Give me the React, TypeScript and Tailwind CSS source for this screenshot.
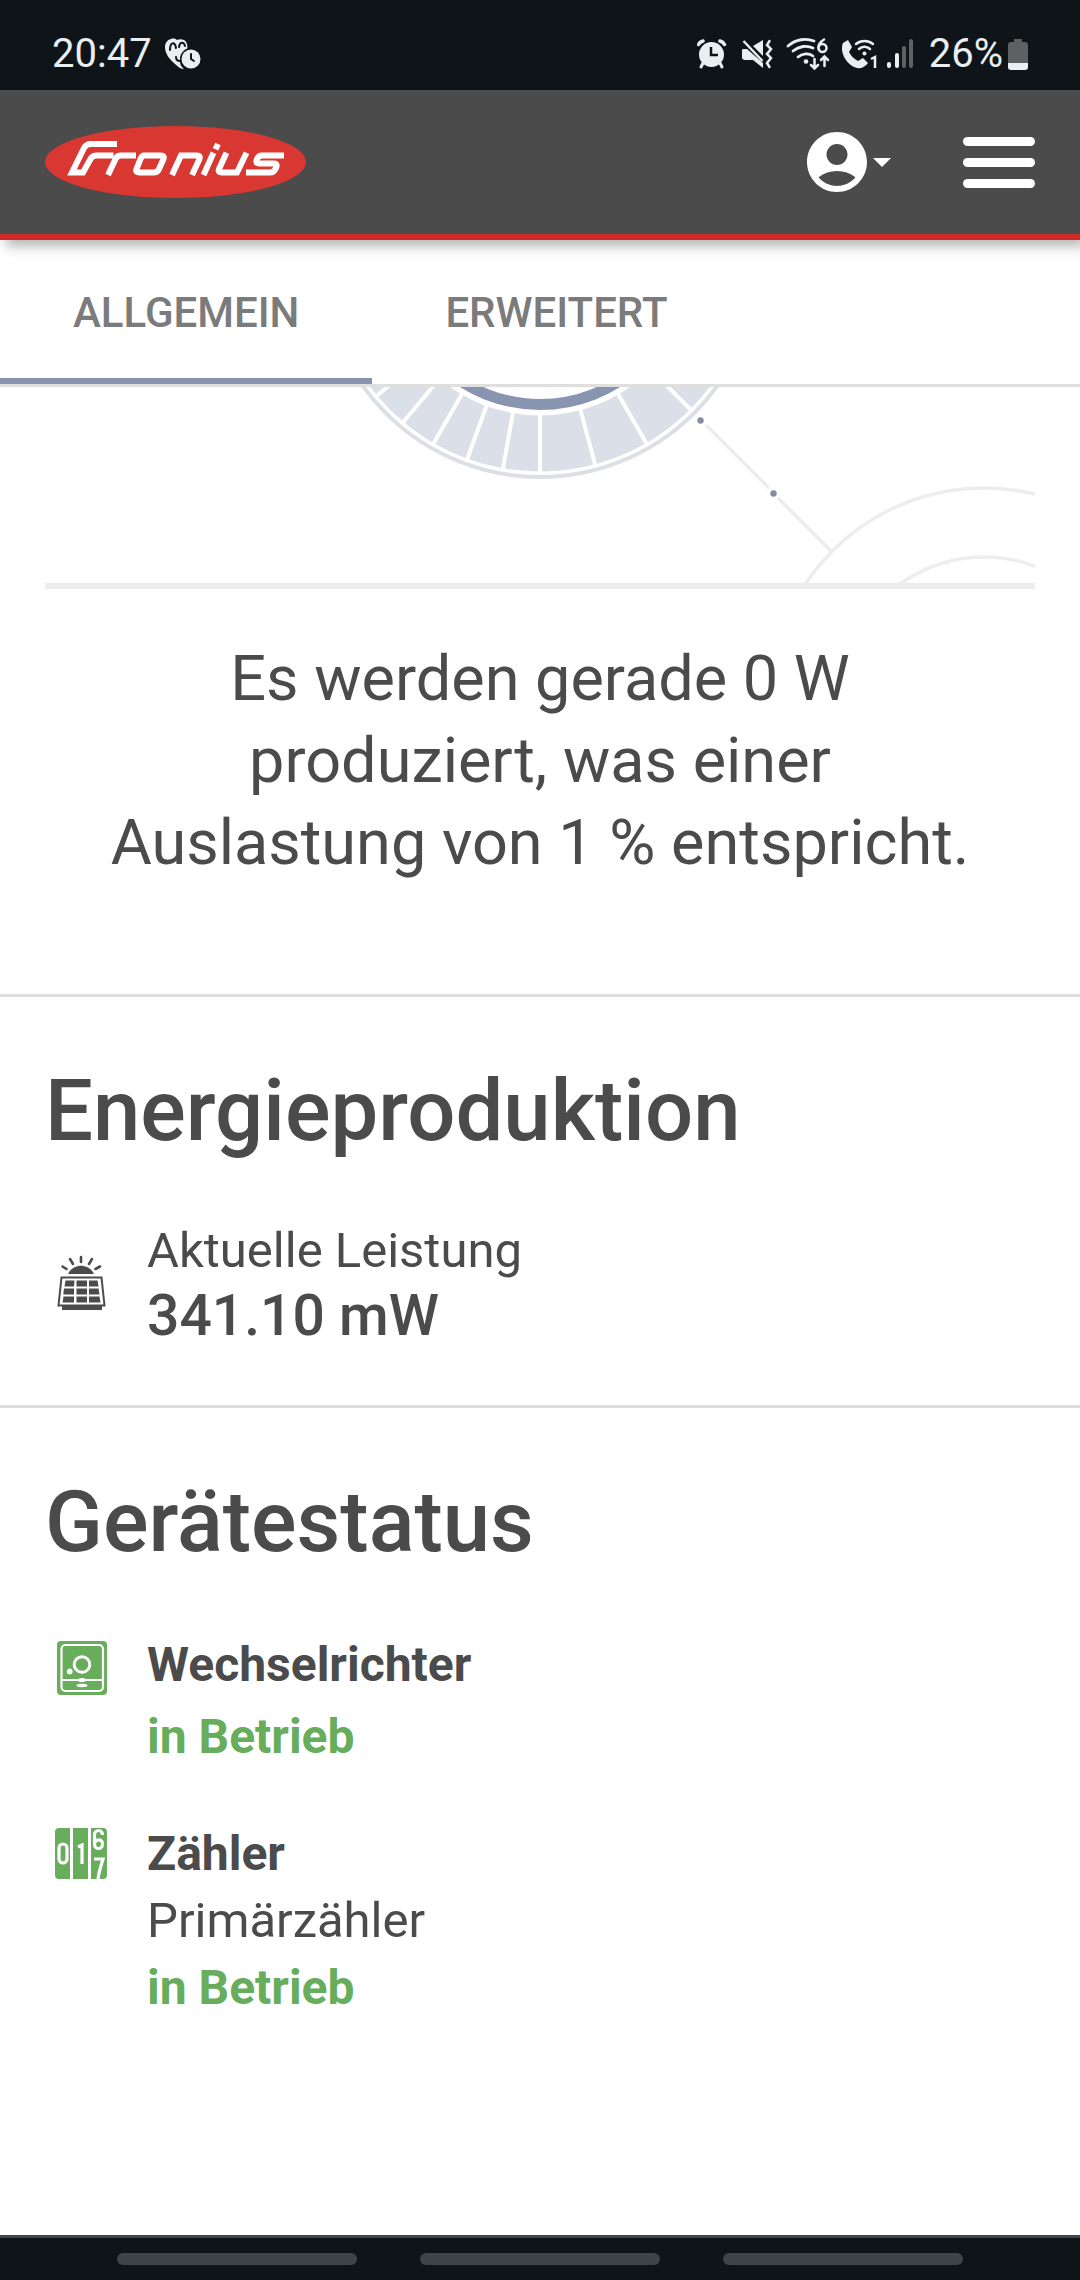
import { MdAccountCircle } from 'react-icons/md'

const tabs = [
  { label: 'Allgemein', active: true },
  { label: 'Erweitert', active: false },
]

// separators of the utilisation ring, degrees clockwise from straight down
const tickAngles = [50, 40, 30, 20, 10, 0, -15, -30, -45, -60]

function StatusBar() {
  return (
    <div className="flex h-[90px] items-center justify-between bg-[#0f1418] px-[52px] pt-[18px] text-[#e9eef1]">
      <div className="flex items-center gap-3">
        <span className="text-[40px] leading-[48px]">20:47</span>
        <svg viewBox="0 0 38 32" className="h-8 w-[38px]" aria-hidden="true">
          <path fill="#e9eef1" d="M7 1c3-1 5 0 6 1 2-1 5-1 7 0 3 2 4 6 3 10-4 2-7 6-7 11 0 3 1 6 4 8-3 0-6-2-9-5C5 21 1 15 1 9c0-4 2-7 6-8z" />
          <path fill="none" stroke="#0f1418" strokeWidth="2" strokeLinecap="round" d="M6 12c0-8 5-9 6-2M15 9c1-6 5-5 6-1M12 19c0 3 2 4 4 4" />
          <circle cx="27" cy="21" r="11" fill="#0f1418" />
          <circle cx="27" cy="21" r="9.5" fill="#e9eef1" />
          <path fill="none" stroke="#0f1418" strokeWidth="2" strokeLinecap="round" d="M27 16v5l3 2" />
        </svg>
      </div>
      <div className="flex items-center">
        <svg viewBox="697 36 184 36" className="h-9 w-[184px]" aria-hidden="true" fill="none" stroke="#e9eef1" strokeLinecap="round">
          {/* alarm */}
          <circle cx="711.5" cy="54.5" r="12.5" fill="#e9eef1" stroke="none" />
          <path strokeWidth="3.5" d="M698.5 44.5c1-2 2.5-3 4.5-3.5M724.5 44.5c-1-2-2.5-3-4.5-3.5" />
          <path strokeWidth="3" d="M703 63l-2 4M720 63l2 4" />
          <path strokeWidth="2.5" stroke="#0f1418" strokeLinecap="butt" d="M711 47v8h7" />
          {/* muted speaker */}
          <path fill="#e9eef1" stroke="none" d="M753 46l10-6v16z" />
          <path fill="#e9eef1" stroke="none" d="M743 49h4l16 14v5l-10-8h-8c-2 0-3-1-3-3v-5c0-2 0-3 1-3z" />
          <path strokeWidth="2.5" strokeLinecap="butt" d="M743.5 41l19 20" />
          <path strokeWidth="2.5" d="M769.5 41l-2.5 4 4 4-4 5 4 4-4 5 2.5 4" />
          {/* wifi 6 */}
          <path strokeWidth="2.8" d="M788 46c8-7 18-8 26-5M793 51c6-5 14-6 20-3M798 57c5-4 11-4 15-1" />
          <circle cx="806" cy="61.5" r="2.3" fill="#e9eef1" stroke="none" />
          <path strokeWidth="2.5" d="M824 39.5c-5 3-6 7-5 10" />
          <circle cx="822.5" cy="48" r="4" strokeWidth="2.5" />
          <path strokeWidth="2.5" d="M814.5 59v9M811 65l3.5 3.5L818 65M824.5 66v-9M821 60l3.5-3.5L828 60" />
          {/* wifi call */}
          <path fill="#e9eef1" stroke="none" d="M843 43l5-3 4 7-3 5c2 4 5 7 9 9l5-3 5 5c-3 4-7 6-11 5-8-2-14-10-15-18 0-3 0-5 1-7z" />
          <path strokeWidth="2.5" d="M856 44c5-4 12-4 17 0M859 49c3-3 8-3 11 0" />
          <circle cx="864.5" cy="53.5" r="2" fill="#e9eef1" stroke="none" />
          <path strokeWidth="2.5" strokeLinecap="butt" d="M871 59l4-2v11" />
        </svg>
        <svg viewBox="0 0 28 32" className="mx-1 h-8 w-7" aria-hidden="true">
          <rect x="2" y="24" width="4" height="6" rx="2" fill="#e9eef1" />
          <rect x="10" y="15" width="4" height="15" rx="2" fill="#e9eef1" />
          <rect x="17" y="8" width="4" height="22" rx="2" fill="#5d6164" />
          <rect x="24" y="1" width="4" height="29" rx="2" fill="#5d6164" />
        </svg>
        <span className="pr-[5px] pl-3 text-[40px] leading-[48px]">26%</span>
        <svg viewBox="0 0 20 32" className="h-8 w-5" aria-hidden="true">
          <path fill="#5d6164" d="M6 1h8v3h3a3 3 0 013 3v18H0V7a3 3 0 013-3h3z" />
          <path fill="#e9eef1" d="M0 25h20v4a3 3 0 01-3 3H3a3 3 0 01-3-3z" />
        </svg>
      </div>
    </div>
  )
}

function Logo() {
  return (
    <svg viewBox="0 0 261 72" className="h-[72px] w-[261px]" role="img" aria-label="Fronius">
      <ellipse cx="130.5" cy="36" rx="130.5" ry="36" fill="#d93832" />
      <g fill="none" stroke="#fff" strokeWidth="6">
        <path d="M72 18H46q-5 0-7 4L27 46.500h11L45.500 33q2-3.500 6-3.500h17" />
        <path d="M63 49l7.500-16q1.500-3.500 5.500-3.500h15" />
        <path d="M99 29.500h17q4 0 2.500 3.500L114 43q-1.500 3.500-5.500 3.500H94q-4 0-2.500-3.500L95.500 33q1.500-3.500 3.500-3.500z" />
        <path d="M127 49l9-19.500h16q4 0 2.500 3.500L147 49" />
        <path d="M158.500 49l10-22.300M170.500 23.300L173 18" />
        <path d="M181.500 26.700L174 43q-1.500 3.500 2.500 3.500h15.500l9.500-19.800" />
        <path d="M239 29.500h-22q-3.500 0-5 3.500-2 4.500 2 4.500h15q4 0 2 4.500t-6 4.500h-24" />
      </g>
    </svg>
  )
}

function Header() {
  return (
    <header className="relative z-10 flex h-[150px] items-center justify-between border-b-6 border-[#cf2d2a] bg-[#4b4b4c] px-[45px] shadow-[6px_6px_12px_rgba(0,0,0,0.3)]">
      <a href="#home">
        <Logo />
      </a>
      <div className="flex items-center gap-[72px]">
        <button aria-label="Konto" className="flex items-center text-white">
          <MdAccountCircle className="size-[72px]" />
          <svg viewBox="0 0 18 9" className="h-[9px] w-[18px]" fill="currentColor" aria-hidden="true">
            <path d="M0 0h18L9 9z" />
          </svg>
        </button>
        <button aria-label="Menü" className="flex w-[72px] flex-col gap-3">
          <span className="h-[9px] rounded-full bg-white" />
          <span className="h-[9px] rounded-full bg-white" />
          <span className="h-[9px] rounded-full bg-white" />
        </button>
      </div>
    </header>
  )
}

function Tabs() {
  return (
    <nav className="flex h-[147px] border-b-3 border-[#dfdfdf]">
      {tabs.map((tab) => (
        <button
          key={tab.label}
          className={`border-b-6 px-[73px] pt-[6px] text-[42px] font-medium uppercase text-[#7b7b7b] ${tab.active ? 'border-[#8994b1]' : 'border-transparent'}`}
        >
          {tab.label}
        </button>
      ))}
    </nav>
  )
}

function EnergyFlow() {
  return (
    <div className="mx-[45px] border-b-6 border-[#ededed]">
      <svg viewBox="45 387 990 196" className="block w-full" aria-hidden="true" fill="none">
        <circle cx="540" cy="259" r="218" stroke="#dcdfe3" strokeWidth="4" />
        <circle cx="540" cy="259" r="184.5" stroke="#dbdfe7" strokeWidth="56" />
        <circle cx="540" cy="259" r="145.5" stroke="#8994b1" strokeWidth="11" />
        {tickAngles.map((angle) => (
          <path key={angle} d="M540 413v62" stroke="#fff" strokeWidth="4" transform={`rotate(${angle} 540 259)`} />
        ))}
        <g stroke="#ededed" strokeWidth="3.5">
          <path d="M706 425l63 63M778 498l53 53" />
          <circle cx="984" cy="702" r="214" />
          <circle cx="984" cy="701" r="144" />
        </g>
        <circle cx="700.5" cy="420.5" r="3.2" fill="#858da1" />
        <circle cx="773.5" cy="493.5" r="3.2" fill="#858da1" />
      </svg>
    </div>
  )
}

function SolarIcon() {
  return (
    <svg viewBox="0 0 50 56" className="h-14 w-[50px]" aria-hidden="true" fill="#4b4b4c">
      <path d="M11 19C16 8 32 8 37 19z" />
      <path fill="none" stroke="#4b4b4c" strokeWidth="2.6" strokeLinecap="round" d="M24 2v5M13 4l3 5M35 4l-3 5M5.500 11.500l4 2.500M43 11.500l-4.500 2.500" />
      <path fill="none" stroke="#4b4b4c" strokeWidth="2" d="M4.500 22.500h40l3 28h-46z" />
      <path d="M8.500 25.500h9l-.5 6H7.500zM19.500 25.500h10.500v6H19.500zM32 25.500h8.500l1 6H32zM7 33.500h10v6H6.300zM19.500 33.500h10.500v6H19.500zM32 33.500h9.500l1 6H32zM6.500 41.500h10.500v6H5.500zM19.500 41.500h10.500v6H19.500zM32 41.500h10.500l1 6H32z" />
      <path d="M5 51h40v4H5z" />
    </svg>
  )
}

function InverterIcon() {
  return (
    <svg viewBox="0 0 50 54" className="h-[54px] w-[50px]" aria-hidden="true" fill="none" stroke="#fff">
      <rect width="50" height="54" rx="4" fill="#67ad5b" stroke="none" />
      <rect x="4.5" y="4" width="41.5" height="46" rx="4" strokeWidth="2.2" />
      <circle cx="25" cy="23.5" r="7.8" strokeWidth="3" />
      <circle cx="12.7" cy="30.5" r="2.9" fill="#fff" stroke="none" />
      <path strokeWidth="2" d="M5 39h40" />
      <ellipse cx="25" cy="39" rx="4" ry="2" fill="#fff" stroke="none" />
      <ellipse cx="25" cy="44.5" rx="5.5" ry="1.7" fill="#fff" stroke="none" />
    </svg>
  )
}

function MeterIcon() {
  return (
    <svg viewBox="0 0 52 51" className="h-[51px] w-[52px]" aria-hidden="true">
      <path fill="#67ad5b" d="M4 0h11v51H4a4 4 0 01-4-4V4a4 4 0 014-4zM18 0h15v51H18zM36 0h12a4 4 0 014 4v43a4 4 0 01-4 4H36z" />
      <g fill="none" stroke="#fff" strokeWidth="3.2">
        <rect x="4" y="16" width="8" height="19" rx="4" />
        <path d="M23 19l4-2v19" />
        <path d="M47.500 7c0-6-8-6-8 0v9c0 6 8 6 8 0s-8-5-8 0" />
        <path d="M39 31h9c-2 7-4 12-5 20" />
      </g>
    </svg>
  )
}

export default function App() {
  return (
    <div className="flex min-h-screen flex-col bg-white font-[Roboto,sans-serif] text-[#4b4b4c]">
      <StatusBar />
      <Header />
      <Tabs />

      <main className="flex-1">
        <section className="border-b-3 border-[#dddddd]">
          <EnergyFlow />
          <p className="mx-auto max-w-[900px] pt-[49px] pb-[110px] text-center text-[63px] leading-[82px]">
            Es werden gerade 0 W produziert, was einer Auslastung von 1 % entspricht.
          </p>
        </section>

        <section className="border-b-3 border-[#dddddd] px-[45px] pt-[60px] pb-[57px]">
          <h2 className="text-[85px] leading-[108px] font-medium">Energieproduktion</h2>
          <div className="mt-[53px] flex items-center">
            <div className="flex w-[102px] shrink-0 pl-3">
              <SolarIcon />
            </div>
            <div>
              <p className="text-[49px] leading-[65px]">Aktuelle Leistung</p>
              <p className="text-[57px] leading-[65px] font-medium">341.10 mW</p>
            </div>
          </div>
        </section>

        <section className="px-[45px] pt-[60px] pb-12">
          <h2 className="text-[85px] leading-[108px] font-medium">Gerätestatus</h2>
          <ul className="mt-[53px] flex flex-col gap-[47px]">
            <li className="flex">
              <div className="w-[102px] shrink-0 pt-3 pl-3">
                <InverterIcon />
              </div>
              <div className="text-[48px] leading-[72px] font-bold">
                <p>Wechselrichter</p>
                <p className="text-[#67ad5b]">in Betrieb</p>
              </div>
            </li>
            <li className="flex">
              <div className="w-[102px] shrink-0 pt-2 pl-[10px]">
                <MeterIcon />
              </div>
              <div className="text-[48px] leading-[67px] font-bold">
                <p>Zähler</p>
                <p className="text-[49px] font-normal">Primärzähler</p>
                <p className="text-[#67ad5b]">in Betrieb</p>
              </div>
            </li>
          </ul>
        </section>
      </main>

      <div className="flex h-[45px] items-center justify-center gap-[63px] border-t-3 border-[#424549] bg-[#0f1418]">
        <span className="h-3 w-60 rounded-full bg-[#3f4448]" />
        <span className="h-3 w-60 rounded-full bg-[#3f4448]" />
        <span className="h-3 w-60 rounded-full bg-[#3f4448]" />
      </div>
    </div>
  )
}
